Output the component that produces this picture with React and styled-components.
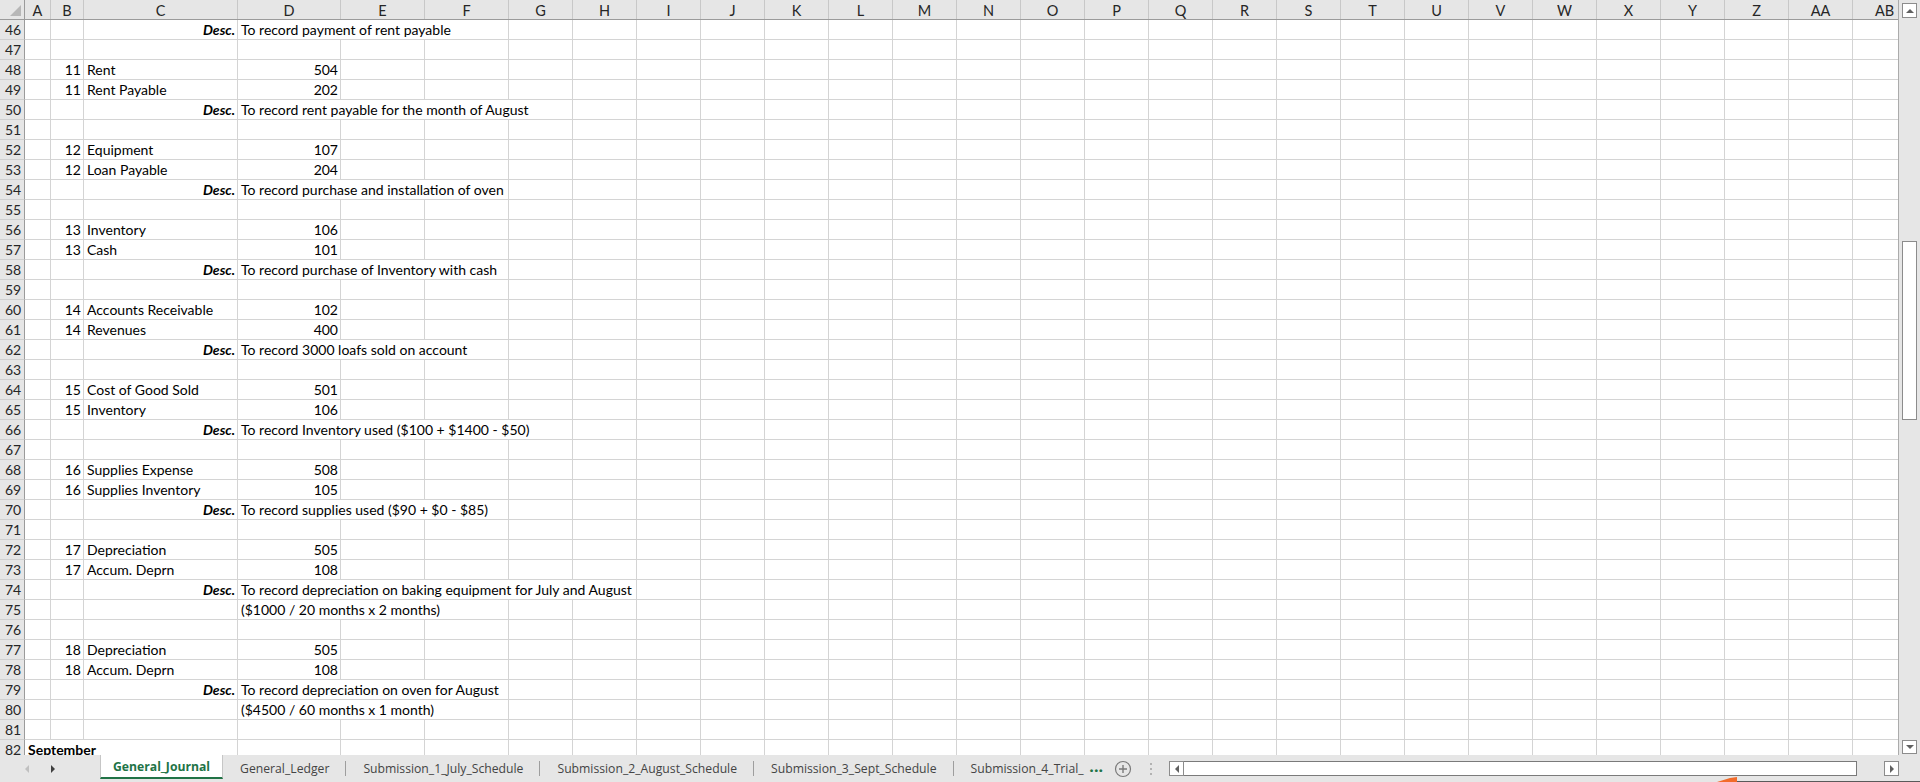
import React from 'react';
import styled, { createGlobalStyle } from 'styled-components';

const GlobalStyle = createGlobalStyle`
  html, body { margin: 0; padding: 0; background: #ffffff; }
  body { width: 1920px; height: 782px; overflow: hidden; }
  * { box-sizing: border-box; }
`

const COLS = [25, 26, 33, 154, 103, 84, 84, ...Array(22).fill(64)];
const LETTERS = ['', 'A', 'B', 'C', 'D', 'E', 'F', 'G', 'H', 'I', 'J', 'K', 'L', 'M', 'N', 'O', 'P', 'Q', 'R', 'S', 'T', 'U', 'V', 'W', 'X', 'Y', 'Z', 'AA', 'AB'];
const TEMPLATE = COLS.map(w => w + 'px').join(' ');

// sheet content, row number -> cells (col index into LETTERS)
const entry = (n, name, acct) => [
    { col: 2, text: n, align: 'right' },
    { col: 3, text: name },
    { col: 4, text: acct, align: 'right' },
];
const desc = (text, span) => [
    { col: 3, text: 'Desc.', align: 'right', bold: true, italic: true },
    { col: 4, text, span },
];
const note = (text, span) => [{ col: 4, text, span }];

const ROWS = {
    46: desc('To record payment of rent payable', 3),
    48: entry(11, 'Rent', 504),
    49: entry(11, 'Rent Payable', 202),
    50: desc('To record rent payable for the month of August', 4),
    52: entry(12, 'Equipment', 107),
    53: entry(12, 'Loan Payable', 204),
    54: desc('To record purchase and installation of oven', 3),
    56: entry(13, 'Inventory', 106),
    57: entry(13, 'Cash', 101),
    58: desc('To record purchase of Inventory with cash', 3),
    60: entry(14, 'Accounts Receivable', 102),
    61: entry(14, 'Revenues', 400),
    62: desc('To record 3000 loafs sold on account', 3),
    64: entry(15, 'Cost of Good Sold', 501),
    65: entry(15, 'Inventory', 106),
    66: desc('To record Inventory used ($100 + $1400 - $50)', 4),
    68: entry(16, 'Supplies Expense', 508),
    69: entry(16, 'Supplies Inventory', 105),
    70: desc('To record supplies used ($90 + $0 - $85)', 3),
    72: entry(17, 'Depreciation', 505),
    73: entry(17, 'Accum. Deprn', 108),
    74: desc('To record depreciation on baking equipment for July and August', 5),
    75: note('($1000 / 20 months x 2 months)', 3),
    77: entry(18, 'Depreciation', 505),
    78: entry(18, 'Accum. Deprn', 108),
    79: desc('To record depreciation on oven for August', 3),
    80: note('($4500 / 60 months x 1 month)', 3),
    82: [{ col: 1, text: 'September', span: 3, bold: true }],
};

const TABS = ['General_Journal', 'General_Ledger', 'Submission_1_July_Schedule', 'Submission_2_August_Schedule', 'Submission_3_Sept_Schedule', 'Submission_4_Trial_'];

const Window = styled.div`
width: 1920px;
height: 782px;
display: flex;
flex-direction: column;
background: #e6e6e6;
position: relative;
font-family: 'Lato', 'Liberation Sans', sans-serif;
`
const Workspace = styled.div`
flex: 1;
display: flex;
min-height: 0;
`
const GridArea = styled.div`
width: 1899px;
overflow: hidden;
background: #ffffff;
border-right: 1px solid #ababab;
`
const Row = styled.div`
display: grid;
grid-template-columns: ${TEMPLATE};
height: 20px;
`
const HeaderRow = styled(Row)`
background: #e6e6e6;
border-bottom: 1px solid #9b9b9b;
`
const ColHead = styled.div`
border-right: 1px solid #c8c8c8;
display: flex;
align-items: center;
justify-content: center;
font-size: 14.5px;
color: #262626;
padding-top: 1px;
`
const Corner = styled.div`
border-right: 1px solid #9b9b9b;
display: flex;
align-items: flex-end;
justify-content: flex-end;
padding: 0 3px 3px 0;
`
const RowHead = styled.div`
background: #e6e6e6;
border-right: 1px solid #9b9b9b;
border-bottom: 1px solid #d0d0d0;
font-size: 14px;
color: #262626;
display: flex;
align-items: flex-end;
justify-content: center;
padding: 0 0 1px 2px;
`
const Cell = styled.div`
grid-column: span ${p => p.$span || 1};
border-right: 1px solid #d4d4d4;
border-bottom: 1px solid #d4d4d4;
font-size: 14px;
color: #000000;
white-space: nowrap;
overflow: visible;
display: flex;
align-items: flex-end;
justify-content: ${p => p.$align === 'right' ? 'flex-end' : 'flex-start'};
padding: 0 2px 1px 3px;
font-weight: ${p => p.$bold ? 700 : 400};
font-style: ${p => p.$italic ? 'italic' : 'normal'};
`
const VScroll = styled.div`
width: 21px;
display: flex;
flex-direction: column;
align-items: center;
padding: 3px 0 1px;
background: #e6e6e6;
`
const ArrowBox = styled.div`
width: 15px;
height: ${p => p.$h || 15}px;
background: #ffffff;
border: 1px solid #8c8c8c;
display: flex;
align-items: center;
justify-content: center;
flex-shrink: 0;
`
const VThumb = styled.div`
width: 15px;
height: ${p => p.$size}px;
margin-top: ${p => p.$offset}px;
background: #ffffff;
border: 1px solid #8c8c8c;
`
const Spacer = styled.div`
flex: 1;
`
const TabBar = styled.div`
height: 27px;
display: flex;
align-items: stretch;
background: #e6e6e6;
`
const NavArrows = styled.div`
width: 100px;
display: flex;
align-items: center;
padding-left: 25px;
gap: 22px;
`
const Tab = styled.div`
display: flex;
align-items: center;
padding: 0 17px 0 17px;
font-family: 'Open Sans', 'Noto Sans', sans-serif;
font-size: 12.2px;
color: #444444;
position: relative;
background: ${p => p.$active ? '#ffffff' : 'transparent'};
font-weight: ${p => p.$active ? 700 : 400};
${p => p.$active && `
  color: #217346;
  padding: 0 12px;
  border-left: 1px solid #c6c6c6;
  border-right: 1px solid #c6c6c6;
  border-bottom: 2px solid #217346;
  margin-bottom: 3px;
`}
${p => p.$sep && `
  &::after {
    content: '';
    position: absolute;
    right: 0;
    top: 6px;
    bottom: 6px;
    width: 1px;
    background: #9e9e9e;
  }
`}
${p => p.$last && `
  padding-right: 1px;
`}
`
const More = styled.div`
display: flex;
align-items: center;
padding: 0 7px 4px 5px;
color: #217346;
font-weight: 800;
font-size: 14px;
letter-spacing: 0.5px;
font-family: 'Open Sans', sans-serif;
`
const IconSlot = styled.div`
display: flex;
align-items: center;
padding: 0 ${p => p.$pad || 0}px;
`
const HScroll = styled.div`
margin-left: auto;
margin-right: 21px;
width: 730px;
display: flex;
align-items: center;
`
const HThumb = styled.div`
flex: 1;
height: 15px;
background: #ffffff;
border: 1px solid #7a7a7a;
border-left: none;
`
const HTrack = styled.div`
width: 27px;
height: 15px;
`
const Overlay = styled.svg`
position: absolute;
left: 1700px;
top: 774px;
`

const Triangle = ({ dir, color = '#606060' }) => {
    const pts = {
        up: '0,4 4,0 8,4',
        down: '0,0 8,0 4,4',
        left: '4,0 4,8 0,4',
        right: '0,0 0,8 4,4',
    }[dir];
    const w = dir === 'up' || dir === 'down' ? 8 : 4;
    const h = dir === 'up' || dir === 'down' ? 4 : 8;
    return (
        <svg width={w} height={h} viewBox={`0 0 ${w} ${h}`}>
            <polygon points={pts} fill={color} />
        </svg>
    )
}

const SheetRow = ({ n }) => {
    const cells = ROWS[n] || [];
    const out = [];
    for (let c = 1; c < LETTERS.length; c++) {
        const cell = cells.find(x => x.col === c);
        if (cell) {
            out.push(
                <Cell key={c} $span={cell.span} $align={cell.align} $bold={cell.bold} $italic={cell.italic}>
                    {cell.text}
                </Cell>
            );
            c += (cell.span || 1) - 1;
        } else {
            out.push(<Cell key={c} />);
        }
    }
    return (
        <Row>
            <RowHead>{n}</RowHead>
            {out}
        </Row>
    )
}

const rowNumbers = Array.from({ length: 37 }, (_, i) => 46 + i);

const App = () => {
    return (
        <Window>
            <GlobalStyle />
            <Workspace>
                <GridArea>
                    <HeaderRow>
                        <Corner>
                            <svg width="11" height="11" viewBox="0 0 11 11"><polygon points="11,0 11,11 0,11" fill="#b7b7b7" /></svg>
                        </Corner>
                        {LETTERS.slice(1).map(l => <ColHead key={l}>{l}</ColHead>)}
                    </HeaderRow>
                    {rowNumbers.map(n => <SheetRow key={n} n={n} />)}
                </GridArea>
                <VScroll>
                    <ArrowBox $h={15}><Triangle dir="up" /></ArrowBox>
                    <VThumb $offset={223} $size={179} />
                    <Spacer />
                    <ArrowBox $h={14}><Triangle dir="down" /></ArrowBox>
                </VScroll>
            </Workspace>
            <TabBar>
                <NavArrows>
                    <Triangle dir="left" color="#c0c0c0" />
                    <Triangle dir="right" color="#404040" />
                </NavArrows>
                {TABS.map((t, i) => (
                    <Tab key={t} $active={i === 0} $sep={i > 0 && i < TABS.length - 1} $last={i === TABS.length - 1}>{t}</Tab>
                ))}
                <More>...</More>
                <IconSlot $pad={4}>
                    <svg width="18" height="18" viewBox="0 0 18 18">
                        <circle cx="9" cy="9" r="7.5" fill="none" stroke="#7a7a7a" strokeWidth="1.2" />
                        <path d="M9 5v8M5 9h8" stroke="#7a7a7a" strokeWidth="1.4" />
                    </svg>
                </IconSlot>
                <IconSlot $pad={13}>
                    <svg width="4" height="14" viewBox="0 0 4 14">
                        <circle cx="2" cy="2" r="1" fill="#a0a0a0" />
                        <circle cx="2" cy="7" r="1" fill="#a0a0a0" />
                        <circle cx="2" cy="12" r="1" fill="#a0a0a0" />
                    </svg>
                </IconSlot>
                <HScroll>
                    <ArrowBox><Triangle dir="left" /></ArrowBox>
                    <HThumb />
                    <HTrack />
                    <ArrowBox><Triangle dir="right" /></ArrowBox>
                </HScroll>
            </TabBar>
            <Overlay width="220" height="8" viewBox="0 0 220 8">
                <polygon points="17,8 30,4 37,3 37,8" fill="#f26b2a" />
                <line x1="37" y1="7.5" x2="220" y2="7.5" stroke="#5a5a5a" strokeWidth="1" />
            </Overlay>
        </Window>
    )
}

export default App
